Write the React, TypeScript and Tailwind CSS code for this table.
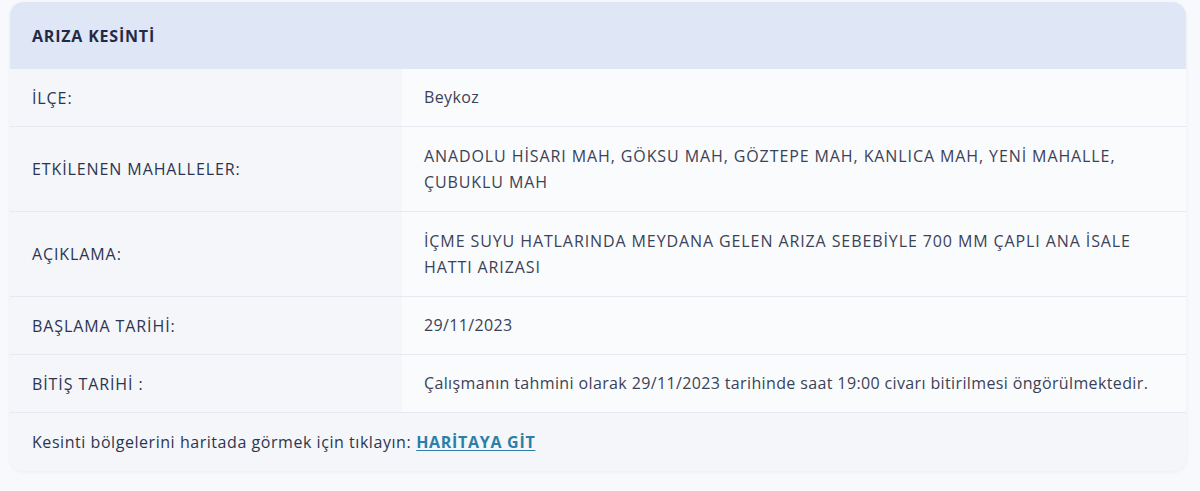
const rows: { label: string; value: string; caps?: boolean }[] = [
  { label: "İLÇE:", value: "Beykoz" },
  {
    label: "ETKİLENEN MAHALLELER:",
    value:
      "ANADOLU HİSARI MAH, GÖKSU MAH, GÖZTEPE MAH, KANLICA MAH, YENİ MAHALLE, ÇUBUKLU MAH",
    caps: true,
  },
  {
    label: "AÇIKLAMA:",
    value:
      "İÇME SUYU HATLARINDA MEYDANA GELEN ARIZA SEBEBİYLE 700 MM ÇAPLI ANA İSALE HATTI ARIZASI",
    caps: true,
  },
  { label: "BAŞLAMA TARİHİ:", value: "29/11/2023" },
  {
    label: "BİTİŞ TARİHİ :",
    value:
      "Çalışmanın tahmini olarak 29/11/2023 tarihinde saat 19:00 civarı bitirilmesi öngörülmektedir.",
  },
];

export default function App() {
  return (
    <div
      className="min-h-[491px] w-[1200px] bg-[#f8f9fc] pl-[10px] pr-[14px] pt-[2px] text-[#2c3550]"
      style={{ fontFamily: "'Open Sans', Lato, sans-serif" }}
    >
      <div className="overflow-hidden rounded-[14px] bg-[#f4f6fa] shadow-[0_1px_4px_rgba(30,50,90,0.06)]">
        <div className="flex h-[67px] items-center bg-[#dfe6f6] px-[22px] text-[16px] font-bold tracking-[0.8px] text-[#1f2b48]">
          ARIZA KESİNTİ
        </div>
        {rows.map((r) => (
          <div
            key={r.label}
            className="grid grid-cols-[392px_1fr] border-b border-[#e6e9ef] text-[16px]"
          >
            <div className="flex min-h-[57px] items-center px-[22px] tracking-[0.9px]">{r.label}</div>
            <div
              className={
                r.caps
                  ? "flex items-center bg-[#fafbfd] py-[16px] pl-[22px] pr-[30px] leading-[26px] tracking-[0.9px] text-[#3a4257]"
                  : "flex items-center bg-[#fafbfd] py-[16px] pl-[22px] pr-[30px] leading-[25px] tracking-[0.37px] text-[#3a4257]"
              }
            >
              <span className="max-w-[730px]">{r.value}</span>
            </div>
          </div>
        ))}
        <div className="flex h-[58px] items-center px-[22px] text-[16px] tracking-[0.55px]">
          <span>Kesinti bölgelerini haritada görmek için tıklayın:</span>
          <a
            href="#"
            className="ml-[5px] font-bold tracking-[0.7px] text-[#2c7fa6] underline underline-offset-2"
          >
            HARİTAYA GİT
          </a>
        </div>
      </div>
    </div>
  );
}
